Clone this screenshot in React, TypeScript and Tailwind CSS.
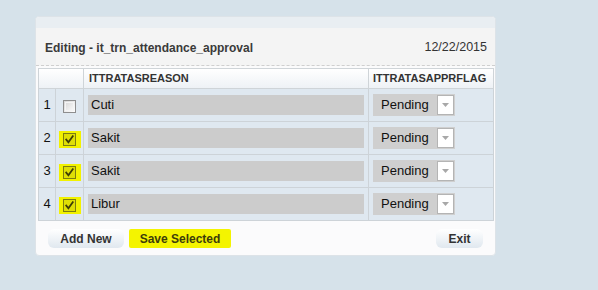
import React from "react";

const rows = [
  { n: 1, reason: "Cuti", checked: false },
  { n: 2, reason: "Sakit", checked: true },
  { n: 3, reason: "Sakit", checked: true },
  { n: 4, reason: "Libur", checked: true },
];

function Check({ checked }: { checked: boolean }) {
  if (!checked) {
    return (
      <span className="flex h-[13px] w-[13px] items-center justify-center border border-[#8e8e8e] bg-gradient-to-br from-[#d6d6d6] to-[#ffffff]">
        <span className="h-[9px] w-[9px] border border-[#f4f4f4] bg-gradient-to-br from-[#dcdcdc] to-[#f7f7f7]" />
      </span>
    );
  }
  return (
    <span className="flex h-[17px] w-[22px] items-center justify-center bg-[#f2f200]">
      <span className="relative flex h-[13px] w-[13px] items-center justify-center border border-[#7d7d12] bg-[#dede06]">
        <svg width="9" height="9" viewBox="0 0 9 9">
          <path d="M1.2 4.6 L3.4 7.2 L7.8 1.2" stroke="#3d3d05" strokeWidth="1.8" fill="none" strokeLinecap="square" />
        </svg>
      </span>
    </span>
  );
}

export default function App() {
  return (
    <div className="h-[290px] w-[598px] overflow-hidden bg-[#d6e2ea] pt-[16px] pl-[35px] font-['Liberation_Sans',Arial,sans-serif]">
      <div className="h-[240px] w-[461px] overflow-hidden rounded-[4px] border border-[#dde3e8] bg-[#fbfbfc]">
        <div className="h-[11px] bg-[#e9eef2]" />
        <div className="flex h-[38px] items-center justify-between border-b border-dashed border-[#cfcfcf] bg-[#f4f4f4] pl-[9px] pr-[8px] pt-[2px]">
          <span className="text-[12px] font-bold text-[#3a3a3a]">Editing - it_trn_attendance_approval</span>
          <span className="text-[12.5px] text-[#333]">12/22/2015</span>
        </div>
        <div className="ml-[2px] mt-[2px]">
          <table className="w-[455px] table-fixed border-collapse border border-[#c9ced2]">
            <colgroup>
              <col className="w-[17px]" />
              <col className="w-[28px]" />
              <col className="w-[285px]" />
              <col className="w-[125px]" />
            </colgroup>
            <thead>
              <tr className="h-[20px] bg-gradient-to-b from-[#ffffff] to-[#edf1f5]">
                <th colSpan={2} className="border border-[#cfd4d8]" />
                <th className="border border-[#cfd4d8] pl-[5px] text-left text-[11px] font-bold text-[#333]">ITTRATASREASON</th>
                <th className="border border-[#cfd4d8] pl-[4px] text-left text-[11px] font-bold text-[#333]">ITTRATASAPPRFLAG</th>
              </tr>
            </thead>
            <tbody>
              {rows.map((r) => (
                <tr key={r.n} className="h-[33px] bg-[#dfe8f0]">
                  <td className="border border-[#cdd3d8] text-center text-[13px] text-[#111]">{r.n}</td>
                  <td className="border border-[#cdd3d8]">
                    <div className="flex items-center justify-center pt-[2px]">
                      <Check checked={r.checked} />
                    </div>
                  </td>
                  <td className="border border-[#cdd3d8] pl-[4px]">
                    <div className="flex h-[20px] w-[276px] items-center bg-[#cccccc] pl-[3px] text-[13px] text-[#111]">
                      {r.reason}
                    </div>
                  </td>
                  <td className="border border-[#cdd3d8] pl-[4px]">
                    <div className="flex h-[22px] w-[82px] items-center justify-between bg-[#cfcfcf] pl-[8px] pr-[1px] text-[13px] text-[#111]">
                      <span>Pending</span>
                      <span className="flex h-[20px] w-[17px] items-center justify-center border border-[#b4b4b4] bg-white">
                        <svg width="7" height="4" viewBox="0 0 7 4">
                          <path d="M0 0 L7 0 L3.5 4 Z" fill="#a8a8a8" />
                        </svg>
                      </span>
                    </div>
                  </td>
                </tr>
              ))}
            </tbody>
          </table>
        </div>
        <div className="mt-[8px] flex items-center pl-[12px] pr-[12px]">
          <button className="flex h-[19px] w-[76px] items-center justify-center rounded-[6px] bg-gradient-to-b from-[#ffffff] to-[#e0e8ef] text-[12px] font-bold text-[#333]">
            Add New
          </button>
          <button className="ml-[5px] flex h-[19px] w-[102px] items-center justify-center rounded-[2px] bg-[#f4f400] text-[12px] font-bold text-[#3d3d0a]">
            Save Selected
          </button>
          <div className="flex-1" />
          <button className="flex h-[19px] w-[47px] items-center justify-center rounded-[6px] bg-gradient-to-b from-[#ffffff] to-[#e0e8ef] text-[12px] font-bold text-[#333]">
            Exit
          </button>
        </div>
      </div>
    </div>
  );
}
